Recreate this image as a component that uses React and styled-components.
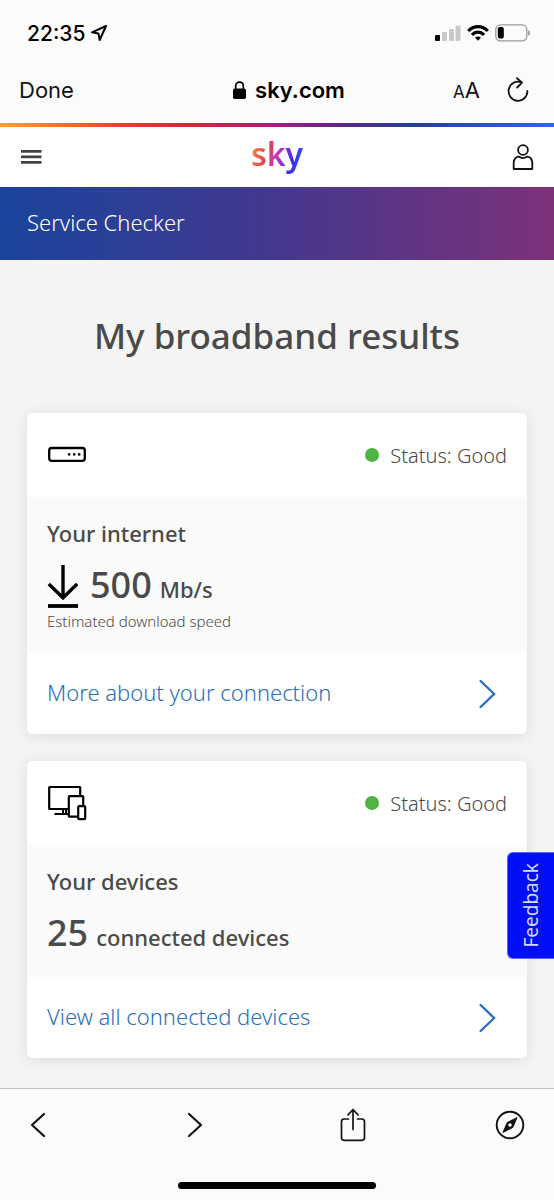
import React from "react";
import styled, { createGlobalStyle } from "styled-components";

const fonts = {
  system: '"Inter", "Liberation Sans", sans-serif',
  brand: '"Noto Sans", "Open Sans", sans-serif'
};

const palette = {
  ink: "#111216",
  text: "#4a4a4a",
  link: "#2a6ebb",
  chrome: "#fbfbfc",
  page: "#f4f4f4",
  panel: "#fafafa",
  good: "#4fb443",
  feedback: "#000ff5"
};

const GlobalStyle = createGlobalStyle`
  * {
    box-sizing: border-box;
  }

  body {
    margin: 0;
    background: ${palette.page};
  }

  h1, h2, p {
    margin: 0;
  }

  svg {
    display: block;
    flex: none;
  }
`;

const Page = styled.div`
  display: flex;
  flex-direction: column;
  min-height: 100vh;
  color: ${palette.text};
  font-family: ${fonts.brand};
`;

const StatusBar = styled.div`
  display: flex;
  align-items: center;
  justify-content: space-between;
  height: 66px;
  padding: 0 23px 0 27px;
  background: ${palette.chrome};
  color: #000;
`;

const Cluster = styled.div`
  display: flex;
  align-items: center;
  gap: ${props => props.$gap}px;
`;

const Clock = styled.span`
  font-family: ${fonts.system};
  font-size: 21px;
  font-weight: 500;
`;

const AddressBar = styled.div`
  display: grid;
  grid-template-columns: 1fr auto 1fr;
  align-items: center;
  height: 57px;
  padding: 0 25px 10px 19px;
  background: ${palette.chrome};
  color: ${palette.ink};
  font-family: ${fonts.system};
`;

const ChromeButton = styled.button`
  display: flex;
  align-items: baseline;
  justify-self: start;
  padding: 0;
  border: 0;
  background: none;
  color: ${palette.ink};
  font-family: inherit;
  font-size: 22px;
  cursor: pointer;
`;

const SmallA = styled.span`
  font-size: 17px;
`;

const Address = styled.div`
  display: flex;
  align-items: center;
  gap: 9px;
  padding-left: 30px;
  color: #000;
  font-size: 22px;
  font-weight: 600;
`;

const AddressActions = styled.div`
  display: flex;
  align-items: center;
  justify-content: flex-end;
  gap: 27px;
`;

const Rainbow = styled.div`
  height: 4px;
  background: linear-gradient(
    90deg,
    #f0a23c 0%,
    #e5402a 22%,
    #d02c34 33%,
    #a0207c 50%,
    #5a2488 62%,
    #25408f 75%,
    #2f66ea 100%
  );
`;

const SiteHeader = styled.header`
  display: grid;
  grid-template-columns: 1fr auto 1fr;
  align-items: center;
  height: 60px;
  padding: 0 20px;
  background: #fff;
`;

const HeaderButton = styled(ChromeButton)`
  justify-self: ${props => props.$side || "start"};
`;

const Logo = styled.a`
  padding-bottom: 6px;
  background: linear-gradient(
    105deg,
    #f2903a 5%,
    #e83e50 32%,
    #c83ab0 48%,
    #9030d0 60%,
    #3a2af0 76%,
    #2c6cf6 95%
  );
  background-clip: text;
  -webkit-background-clip: text;
  color: transparent;
  font-size: 32px;
  font-weight: 600;
  line-height: 40px;
  text-decoration: none;
`;

const Banner = styled.div`
  display: flex;
  align-items: center;
  height: 73px;
  padding: 0 27px 4px;
  background: linear-gradient(90deg, #1a449c 0%, #44388e 50%, #7d3179 100%);
  color: #fff;
  font-size: 22px;
  font-weight: 300;
`;

const Main = styled.main`
  flex: 1;
  padding: 0 27px 30px;
  background: ${palette.page};
`;

const Title = styled.h1`
  padding: 52px 0 53px;
  font-size: 35px;
  font-weight: 500;
  line-height: 48px;
  text-align: center;
`;

const CardList = styled.div`
  display: grid;
  gap: 27px;
`;

const StyledCard = styled.section`
  border-radius: 5px;
  background: #fff;
  box-shadow: 0 2px 14px rgba(0, 0, 0, 0.1);
`;

const CardTop = styled.div`
  display: flex;
  align-items: center;
  justify-content: space-between;
  height: 84px;
  padding: 0 20px;
`;

const Status = styled.p`
  display: flex;
  align-items: center;
  gap: 11px;
  font-size: 20px;
  font-weight: 300;
`;

const Dot = styled.span`
  width: 14px;
  height: 14px;
  border-radius: 50%;
  background: ${palette.good};
`;

const CardBody = styled.div`
  padding: 20px;
  background: ${palette.panel};
`;

const CardTitle = styled.h2`
  font-size: 22px;
  font-weight: 500;
  line-height: 32px;
`;

const Figure = styled.p`
  display: flex;
  align-items: center;
  gap: 12px;
  height: 44px;
  margin-top: 16px;
  font-size: 22px;
  font-weight: 500;
  line-height: 44px;
`;

const Amount = styled.strong`
  margin-right: 8px;
  font-size: 36px;
  font-weight: 500;
`;

const Caption = styled.p`
  font-size: 15px;
  font-weight: 300;
  line-height: 24px;
`;

const CardLink = styled.a`
  display: flex;
  align-items: center;
  justify-content: space-between;
  height: 81px;
  padding: 0 31px 0 20px;
  color: ${palette.link};
  font-size: 22px;
  font-weight: 300;
  text-decoration: none;
`;

const LinkLabel = styled.span`
  padding-bottom: 4px;
`;

const FeedbackTab = styled.button`
  position: fixed;
  top: 71%;
  right: 0;
  width: 47px;
  height: 107px;
  padding: 6px 0 0;
  border: 1px solid #5a66ff;
  border-right: 0;
  border-radius: 6px 0 0 6px;
  background: ${palette.feedback};
  color: #d5d8ff;
  font-family: ${fonts.brand};
  font-size: 19px;
  cursor: pointer;
`;

const Sideways = styled.span`
  display: inline-block;
  writing-mode: vertical-rl;
  transform: rotate(180deg);
`;

const BottomBar = styled.footer`
  height: 112px;
  border-top: 1px solid #bfbfc1;
  background: ${palette.chrome};
`;

const BottomNav = styled.nav`
  display: flex;
  align-items: center;
  justify-content: space-between;
  height: 72px;
  padding: 0 29px 0 23px;
`;

const NavButton = styled(ChromeButton)`
  justify-content: center;
  width: 30px;
`;

const HomeIndicator = styled.div`
  width: 198px;
  height: 7px;
  margin: 21px auto 0;
  border-radius: 4px;
  background: #000;
`;

const LocationIcon = () => (
  <svg width="18" height="18" viewBox="0 0 18 18" fill="none" stroke="#000" strokeWidth="2" strokeLinejoin="round">
    <path d="M16 2 L2 8.3 L8.4 9.4 L9.7 16 Z" />
  </svg>
);

const SignalIcon = () => (
  <svg width="26" height="16" viewBox="0 0 26 16" fill="#c9c9ca">
    <rect x="0" y="10" width="5" height="6" rx="1" fill="#000" />
    <rect x="7" y="7" width="5" height="9" rx="1" />
    <rect x="14" y="4" width="5" height="12" rx="1" />
    <rect x="20.5" y="0.5" width="5" height="15.5" rx="1" />
  </svg>
);

const WifiIcon = () => (
  <svg width="22" height="16" viewBox="0 0 22 16" fill="none" stroke="#000" strokeWidth="3.1">
    <path d="M1.2 6 C6.8 0.2 15.2 0.2 20.8 6" />
    <path d="M4.9 9.8 C8.5 6.2 13.5 6.2 17.1 9.8" />
    <path d="M8 12.6 C9.8 11 12.2 11 14 12.6 L11 15.7 Z" fill="#000" stroke="none" />
  </svg>
);

const BatteryIcon = () => (
  <svg width="36" height="18" viewBox="0 0 36 18" fill="none">
    <rect x="0.8" y="0.8" width="31" height="16" rx="4.5" stroke="#9b9b9c" strokeWidth="1.3" />
    <rect x="2.8" y="3" width="6" height="11.5" rx="1.8" fill="#000" />
    <path d="M33.2 6 C35.6 7 35.6 11 33.2 12 Z" fill="#9b9b9c" />
  </svg>
);

const LockIcon = () => (
  <svg width="13" height="18" viewBox="0 0 13 18" fill="none">
    <rect x="0" y="7.5" width="13" height="10.5" rx="1.8" fill="#000" />
    <path d="M2.7 8 V5 C2.7 -0.2 10.3 -0.2 10.3 5 V8" stroke="#000" strokeWidth="1.7" />
  </svg>
);

const ReloadIcon = () => (
  <svg width="22" height="26" viewBox="0 0 22 26" fill="none" stroke={palette.ink} strokeWidth="1.8" strokeLinecap="round" strokeLinejoin="round">
    <path d="M14.3 5.2 A9.4 9.6 0 1 0 20.4 14" />
    <path d="M10 1.2 L15 5.6 L10.2 10.5" />
  </svg>
);

const MenuIcon = () => (
  <svg width="22" height="14" viewBox="0 0 22 14" fill="#414144">
    <rect x="1" y="0" width="20.5" height="2.7" />
    <rect x="1" y="5.5" width="20.5" height="2.7" />
    <rect x="1" y="11" width="20.5" height="2.7" />
  </svg>
);

const AccountIcon = () => (
  <svg width="22" height="26" viewBox="0 0 22 26" fill="none" stroke="#111" strokeWidth="1.8">
    <circle cx="11" cy="6" r="4.9" />
    <path d="M6.8 12.6 C4 12.6 1.7 15.4 1.7 18.5 V25 H20.3 V18.5 C20.3 15.4 18 12.6 15.2 12.6 C12.8 14.3 9.2 14.3 6.8 12.6 Z" strokeLinejoin="round" />
  </svg>
);

const RouterIcon = () => (
  <svg width="40" height="18" viewBox="0 0 40 18" fill="none">
    <rect x="2.2" y="2" width="35.6" height="12.8" rx="2.5" stroke="#000" strokeWidth="2.3" />
    <circle cx="22.2" cy="8.4" r="1.3" fill="#000" />
    <circle cx="27.2" cy="8.4" r="1.3" fill="#000" />
    <circle cx="32.2" cy="8.4" r="1.3" fill="#000" />
  </svg>
);

const DevicesIcon = () => (
  <svg width="40" height="36" viewBox="0 0 40 36" fill="#fff" stroke="#000" strokeWidth="2.2" strokeLinejoin="round">
    <path d="M7.5 29 H22 M16 24 V29 M19 24 V29" strokeWidth="2" />
    <rect x="2.2" y="2" width="31" height="22" rx="0.5" />
    <rect x="21.8" y="11.2" width="14.4" height="20.4" rx="0.5" />
    <rect x="31.2" y="21.2" width="7" height="13" rx="1" />
  </svg>
);

const DownloadIcon = () => (
  <svg width="31" height="44" viewBox="0 0 31 44" fill="none" stroke="#000">
    <path d="M16 0 V33 M1.8 19 L16 32.8 L30.2 19" strokeWidth="3.4" />
    <path d="M1 41 H31" strokeWidth="3.8" />
  </svg>
);

const ChevronIcon = () => (
  <svg width="17" height="30" viewBox="0 0 17 30" fill="none" stroke={palette.link} strokeWidth="2.4" strokeLinecap="round" strokeLinejoin="round">
    <path d="M1.6 2 L15.2 15 L1.6 28" />
  </svg>
);

const ArrowIcon = ({ path }) => (
  <svg width="18" height="26" viewBox="0 0 18 26" fill="none" stroke={palette.ink} strokeWidth="2.2" strokeLinecap="round" strokeLinejoin="round">
    <path d={path} />
  </svg>
);

const ShareIcon = () => (
  <svg width="26" height="34" viewBox="0 0 26 34" fill="none" stroke={palette.ink} strokeWidth="1.7" strokeLinecap="round" strokeLinejoin="round">
    <path d="M8.5 11 H4.2 Q1.5 11 1.5 13.7 V29.6 Q1.5 32.3 4.2 32.3 H21.8 Q24.5 32.3 24.5 29.6 V13.7 Q24.5 11 21.8 11 H17.5" />
    <path d="M13 21.5 V1.8 M8 6.8 L13 1.5 L18 6.8" />
  </svg>
);

const CompassIcon = () => (
  <svg width="30" height="30" viewBox="0 0 30 30" fill="none">
    <circle cx="15" cy="15" r="13.3" stroke={palette.ink} strokeWidth="1.9" />
    <path d="M22 7.6 L17.8 17.4 L8 22.4 L12.2 12.6 Z" fill={palette.ink} stroke={palette.ink} strokeLinejoin="round" />
    <circle cx="15" cy="15" r="1.8" fill="#fff" />
  </svg>
);

const Card = ({ icon, title, link, children }) => (
  <StyledCard>
    <CardTop>
      {icon}
      <Status>
        <Dot />
        Status: Good
      </Status>
    </CardTop>
    <CardBody>
      <CardTitle>{title}</CardTitle>
      {children}
    </CardBody>
    <CardLink href="#">
      <LinkLabel>{link}</LinkLabel>
      <ChevronIcon />
    </CardLink>
  </StyledCard>
);

const App = () => (
  <Page>
    <GlobalStyle />
    <StatusBar>
      <Cluster $gap={5}>
        <Clock>22:35</Clock>
        <LocationIcon />
      </Cluster>
      <Cluster $gap={6}>
        <SignalIcon />
        <WifiIcon />
        <BatteryIcon />
      </Cluster>
    </StatusBar>
    <AddressBar>
      <ChromeButton>Done</ChromeButton>
      <Address>
        <LockIcon />
        sky.com
      </Address>
      <AddressActions>
        <ChromeButton aria-label="Text size">
          <SmallA>A</SmallA>A
        </ChromeButton>
        <ChromeButton aria-label="Reload">
          <ReloadIcon />
        </ChromeButton>
      </AddressActions>
    </AddressBar>
    <Rainbow />
    <SiteHeader>
      <HeaderButton aria-label="Menu">
        <MenuIcon />
      </HeaderButton>
      <Logo href="#">sky</Logo>
      <HeaderButton $side="end" aria-label="Account">
        <AccountIcon />
      </HeaderButton>
    </SiteHeader>
    <Banner>Service Checker</Banner>
    <Main>
      <Title>My broadband results</Title>
      <CardList>
        <Card icon={<RouterIcon />} title="Your internet" link="More about your connection">
          <Figure>
            <DownloadIcon />
            <span>
              <Amount>500</Amount>
              Mb/s
            </span>
          </Figure>
          <Caption>Estimated download speed</Caption>
        </Card>
        <Card icon={<DevicesIcon />} title="Your devices" link="View all connected devices">
          <Figure>
            <span>
              <Amount>25</Amount>
              connected devices
            </span>
          </Figure>
        </Card>
      </CardList>
    </Main>
    <FeedbackTab>
      <Sideways>Feedback</Sideways>
    </FeedbackTab>
    <BottomBar>
      <BottomNav>
        <NavButton aria-label="Back">
          <ArrowIcon path="M15 2 L3 13 L15 24" />
        </NavButton>
        <NavButton aria-label="Forward">
          <ArrowIcon path="M3 2 L15 13 L3 24" />
        </NavButton>
        <NavButton aria-label="Share">
          <ShareIcon />
        </NavButton>
        <NavButton aria-label="Open in Safari">
          <CompassIcon />
        </NavButton>
      </BottomNav>
      <HomeIndicator />
    </BottomBar>
  </Page>
);

export default App;
